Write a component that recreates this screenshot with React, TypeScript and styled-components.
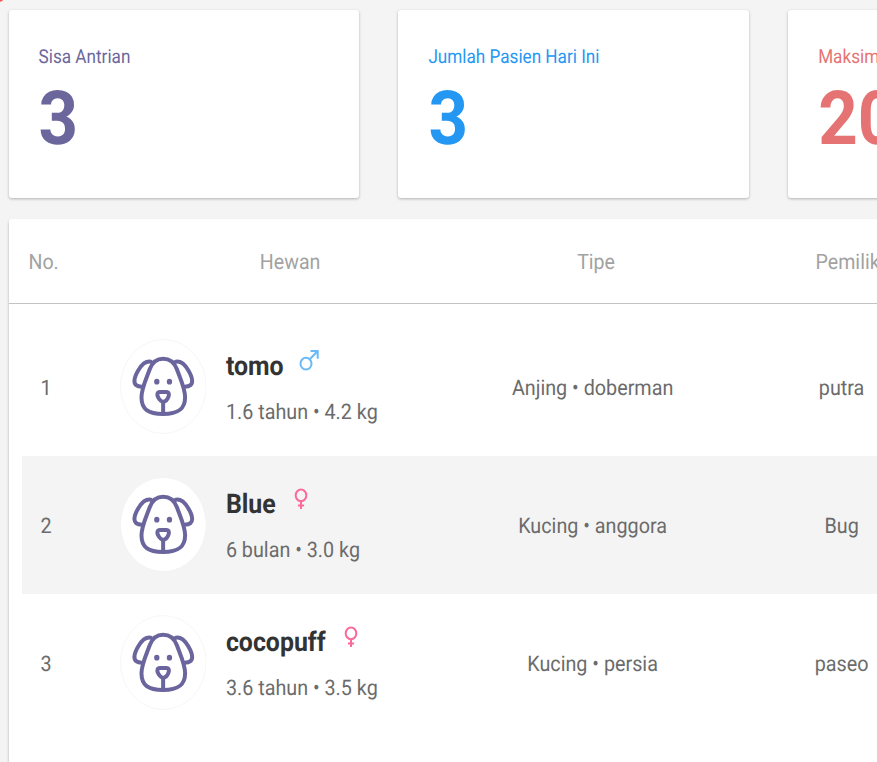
import React from 'react';
import styled, { createGlobalStyle } from 'styled-components';

const GlobalStyle = createGlobalStyle`
  * { box-sizing: border-box; }
  html, body { margin: 0; height: 100%; overflow: hidden; background: #f4f4f4; }
  body {
    font-family: Roboto, sans-serif;
    color: #6b6b6b;
    text-rendering: geometricPrecision;
  }
`;

const Page = styled.main`
  position: relative;
  width: 877px;
  height: 762px;
  overflow: hidden;
  padding: 10px 0 0 8.6px;
`;

const CornerDot = styled.span`
  position: absolute;
  top: -7px;
  left: -7px;
  width: 11px;
  height: 9px;
  border-radius: 50%;
  background: #ff5252;
`;

const Cards = styled.section`
  display: grid;
  grid-template-columns: repeat(3, 350.4px);
  column-gap: 39.4px;
`;

const Card = styled.article<{ $color: string }>`
  height: 188px;
  padding: 35px 0 0 30px;
  border-radius: 3px;
  background: #fff;
  box-shadow: 0 1px 3px rgba(0, 0, 0, 0.28);
  color: ${(p) => p.$color};
`;

const Text = styled.span<{ $size: number; $bold?: boolean }>`
  display: block;
  width: max-content;
  font-size: ${(p) => p.$size}px;
  font-weight: ${(p) => (p.$bold ? 700 : 400)};
  white-space: nowrap;
  transform: scaleY(1.085);
`;

const CardLabel = styled(Text)`
  line-height: 24px;
  transform: translateY(0.5px) scaleY(1.12);
`;

const CardValue = styled(Text)`
  line-height: 80px;
  margin-top: 10px;
`;

const Panel = styled.section`
  width: 1131px;
  height: 560px;
  margin-top: 21.3px;
  border-radius: 3px;
  background: #fff;
  box-shadow: 0 2px 3px rgba(0, 0, 0, 0.3);
`;

const Header = styled.header`
  display: grid;
  grid-template-columns: 70px 391.5px 252px 251px;
  align-items: center;
  height: 84.7px;
  padding-top: 2px;
  border-bottom: 1.5px solid #c3c3c3;
  color: #a2a2a2;
`;

const Cell = styled.div<{ $inset?: number }>`
  display: flex;
  justify-content: center;
  padding-left: ${(p) => p.$inset ?? 0}px;
`;

const Rows = styled.div`
  padding: 13.6px 13px 0;
`;

const Row = styled.div<{ $shaded: boolean }>`
  display: grid;
  grid-template-columns: 49px 397.5px 249px 249px;
  align-items: center;
  height: 138px;
  background: ${(p) => (p.$shaded ? '#f4f4f4' : '#fff')};
`;

const RowCell = styled(Cell)`
  padding-top: 2px;
`;

const Animal = styled.div`
  display: flex;
  align-items: center;
  padding-left: 49.2px;
  gap: 19.5px;
`;

const AvatarSvg = styled.svg`
  display: block;
  width: 86.6px;
  height: 95px;
  flex: none;
`;

const Details = styled.div`
  display: flex;
  flex-direction: column;
  gap: 16px;
  padding-top: 5px;
`;

const NameLine = styled.div`
  display: flex;
  align-items: center;
  height: 30px;
  gap: 15px;
`;

const Name = styled(Text)`
  color: #333;
`;

const GenderSvg = styled.svg`
  display: block;
  width: 22px;
  height: 24px;
  margin-top: -12px;
`;

const BodyText = styled(Text)`
  line-height: 30px;
`;

function DogAvatar() {
  return (
    <AvatarSvg viewBox="0.5 -4 260 285" preserveAspectRatio="none" fill="none">
      <ellipse cx="130.5" cy="138.5" rx="128.5" ry="141" fill="#fff" stroke="#ececec" strokeWidth="1.5" />
      <g stroke="#6b659d" strokeWidth="12" strokeLinecap="round" strokeLinejoin="round">
        <path d="M130 55 C109 55 97 67 90 86 C79 116 65 144 65 171 C65 207 85 221 130 221 C175 221 196 207 196 171 C196 144 182 116 171 86 C164 67 151 55 130 55 Z" />
        <path d="M93 64 C76 61 65 74 56 89 C48 102 44 110 44 121 C43 133 51 139 66 139" />
        <path d="M168 64 C185 61 196 74 205 89 C213 102 217 110 217 121 C218 133 210 139 195 139" />
        <path d="M120 155 H140 C147 155 149 162 146 169 C142 179 137 184 130 184 C124 184 119 179 114 169 C111 162 113 155 120 155 Z" />
        <path d="M130 184 V221" strokeLinecap="butt" />
      </g>
      <ellipse cx="111" cy="124" rx="8" ry="8.5" fill="#6b659d" />
      <ellipse cx="149" cy="124" rx="8" ry="8.5" fill="#6b659d" />
    </AvatarSvg>
  );
}

function Gender({ male }: { male: boolean }) {
  return male ? (
    <GenderSvg viewBox="0 0 22 24" fill="none" stroke="#6abaf8" strokeWidth="2">
      <ellipse cx="7" cy="15.7" rx="5.5" ry="5.9" />
      <path d="M10.8 11.3 L18.4 3.2 M11.5 3 H18.7 V10.8" />
    </GenderSvg>
  ) : (
    <GenderSvg viewBox="0 0 22 24" fill="none" stroke="#fb6a9a" strokeWidth="2">
      <ellipse cx="10" cy="9.4" rx="5.3" ry="5.8" />
      <path d="M10 15.2 V23 M6.9 19.6 H13.1" />
    </GenderSvg>
  );
}

const stats = [
  { label: 'Sisa Antrian', value: '3', color: '#6b679c' },
  { label: 'Jumlah Pasien Hari Ini', value: '3', color: '#2497f3' },
  { label: 'Maksimum Pasien', value: '20', color: '#e57373' },
];

const patients = [
  { name: 'tomo', male: true, info: '1.6 tahun • 4.2 kg', type: 'Anjing • doberman', owner: 'putra' },
  { name: 'Blue', male: false, info: '6 bulan • 3.0 kg', type: 'Kucing • anggora', owner: 'Bug' },
  { name: 'cocopuff', male: false, info: '3.6 tahun • 3.5 kg', type: 'Kucing • persia', owner: 'paseo' },
];

export default function App() {
  return (
    <>
      <GlobalStyle />
      <Page>
        <CornerDot />
        <Cards>
          {stats.map((s) => (
            <Card key={s.label} $color={s.color}>
              <CardLabel $size={17.15}>{s.label}</CardLabel>
              <CardValue $size={69} $bold>{s.value}</CardValue>
            </Card>
          ))}
        </Cards>
        <Panel>
          <Header>
            <Cell><BodyText $size={19.6}>No.</BodyText></Cell>
            <Cell $inset={31.5}><BodyText $size={19.6}>Hewan</BodyText></Cell>
            <Cell><BodyText $size={19.6}>Tipe</BodyText></Cell>
            <Cell><BodyText $size={19.6}>Pemilik</BodyText></Cell>
          </Header>
          <Rows>
            {patients.map((p, i) => (
              <Row key={p.name} $shaded={i % 2 === 1}>
                <RowCell><BodyText $size={19.75}>{i + 1}</BodyText></RowCell>
                <Animal>
                  <DogAvatar />
                  <Details>
                    <NameLine>
                      <Name as="strong" $size={24.9} $bold>{p.name}</Name>
                      <Gender male={p.male} />
                    </NameLine>
                    <BodyText $size={19.75}>{p.info}</BodyText>
                  </Details>
                </Animal>
                <RowCell><BodyText $size={19.75}>{p.type}</BodyText></RowCell>
                <RowCell><BodyText $size={19.75}>{p.owner}</BodyText></RowCell>
              </Row>
            ))}
          </Rows>
        </Panel>
      </Page>
    </>
  );
}
